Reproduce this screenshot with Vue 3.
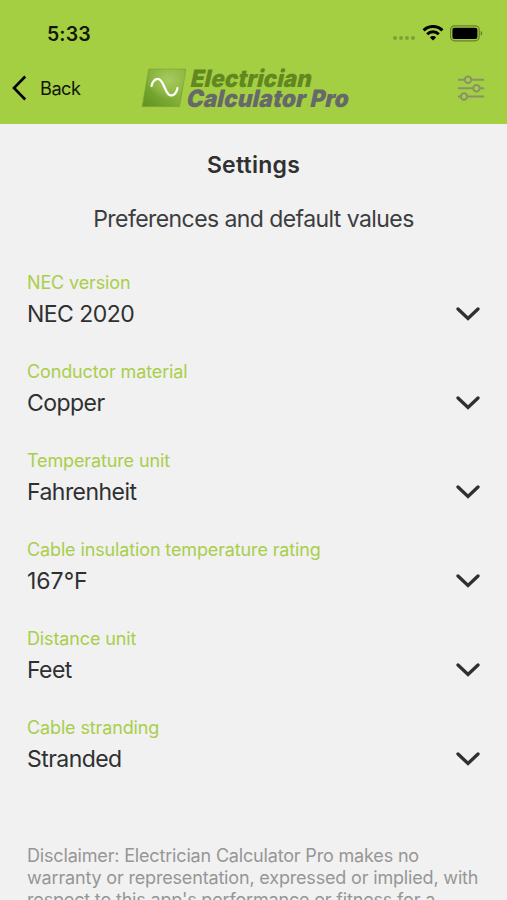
<template>
  <div class="screen">
    <header class="header">
      <div class="status-bar">
        <span class="time">5:33</span>
        <div class="status-icons">
          <svg class="signal" width="24" height="6" viewBox="0 0 24 6">
            <circle v-for="n in 4" :key="n" :cx="n * 6 - 3" cy="3" r="2" />
          </svg>
          <svg class="wifi" width="22" height="16" viewBox="0 0 22 16">
            <path d="M1.6 5.4a13.2 13.2 0 0 1 18.8 0" />
            <path d="M5.2 9.2a8.2 8.2 0 0 1 11.6 0" />
            <path class="wifi-dot" d="M11 15.4 7.9 12.4a4.4 4.4 0 0 1 6.2 0z" />
          </svg>
          <svg class="battery" width="33" height="17" viewBox="0 0 33 17">
            <rect class="battery-case" x="0.6" y="0.8" width="28.6" height="15" rx="4" />
            <rect x="2.4" y="2.7" width="25" height="11.2" rx="2" />
            <path class="battery-tip" d="M30.7 5.8c2 .9 2 4.1 0 5z" />
          </svg>
        </div>
      </div>

      <nav class="nav-bar">
        <button class="back">
          <svg width="16" height="26" viewBox="0 0 16 26">
            <path d="M13.2 1.5 2 13l11.2 11.5" />
          </svg>
          <span>Back</span>
        </button>
        <svg class="logo" width="210" height="44" viewBox="0 0 210 44">
          <defs>
            <linearGradient id="badge" x1="0" y1="1" x2="1" y2="0">
              <stop offset="0" stop-color="#5f921c" />
              <stop offset="0.5" stop-color="#83b13a" />
              <stop offset="1" stop-color="#8bb83e" />
            </linearGradient>
            <radialGradient id="glow" cx="0.6" cy="0.3" r="0.5">
              <stop offset="0" stop-color="#b6d26b" stop-opacity="0.75" />
              <stop offset="1" stop-color="#b6d26b" stop-opacity="0" />
            </radialGradient>
          </defs>
          <path class="badge" d="M7.8 3.2H44.8L38.5 40.6H1.2z" fill="url(#badge)" />
          <path d="M7.8 3.2H44.8L38.5 40.6H1.2z" fill="url(#glow)" />
          <path class="wave" d="M10.5 20C12.5 12 18.5 10.500 21.700 17.5L25.500 25.5C29 32.5 35 29.5 36.500 22" />
          <text class="logo-top" transform="translate(48.5 21.3) skewX(-12)" textLength="121" lengthAdjust="spacingAndGlyphs">Electrician</text>
          <text class="logo-bottom" transform="translate(44.5 41) skewX(-12)" textLength="162" lengthAdjust="spacingAndGlyphs">Calculator Pro</text>
        </svg>
        <svg class="sliders" width="26" height="26" viewBox="0 0 26 26">
          <path d="M0 4.8h6.8M13.2 4.8H26M0 13.2h15.3M21.7 13.2H26M0 21.5h2.8M9.2 21.5H26" />
          <circle cx="10" cy="4.8" r="3.2" />
          <circle cx="18.5" cy="13.2" r="3.2" />
          <circle cx="6" cy="21.5" r="3.2" />
        </svg>
      </nav>
    </header>

    <main class="content">
      <h1>Settings</h1>
      <p class="subtitle">Preferences and default values</p>

      <div class="settings">
        <div v-for="item in settings" :key="item.label" class="setting">
          <span class="label">{{ item.label }}</span>
          <div class="value">
            <span :class="{ degrees: item.degrees }">{{ item.value }}</span>
            <svg width="24" height="14" viewBox="0 0 24 14">
              <path d="M2 2 12 11.5 22 2" />
            </svg>
          </div>
        </div>
      </div>

      <p class="disclaimer">
        Disclaimer: Electrician Calculator Pro makes no<br />
        warranty or representation, expressed or implied, with<br />
        respect to this app's performance or fitness for a
      </p>
    </main>
  </div>
</template>

<script setup>
import { ref } from 'vue'

const settings = ref([
  { label: 'NEC version', value: 'NEC 2020' },
  { label: 'Conductor material', value: 'Copper' },
  { label: 'Temperature unit', value: 'Fahrenheit' },
  { label: 'Cable insulation temperature rating', value: '167°F', degrees: true },
  { label: 'Distance unit', value: 'Feet' },
  { label: 'Cable stranding', value: 'Stranded' },
])
</script>

<style>
body {
  margin: 0;
  background: #f1f1f1;
}
</style>

<style scoped>
.screen {
  height: 900px;
  overflow: hidden;
  background: #f1f1f1;
  color: #2f3032;
  font-family: Inter, "Liberation Sans", sans-serif;
}

.header {
  box-sizing: border-box;
  height: 124px;
  background: #a5cf42;
}

.status-bar {
  display: flex;
  align-items: center;
  justify-content: space-between;
  height: 66px;
  padding: 0 23px 0 47px;
}

.time {
  padding-top: 1px;
  color: #111a05;
  font-size: 19.5px;
  font-weight: 600;
  letter-spacing: 0.1px;
}

.status-icons {
  display: flex;
  align-items: center;
}

.signal {
  margin: 10px 6px 0 0;
  fill: #7f9f35;
}

.wifi {
  margin-right: 6px;
  fill: none;
  stroke: #000;
  stroke-width: 3;
}

.wifi-dot {
  fill: #000;
  stroke: none;
}

.battery {
  margin-right: 1px;
}

.battery-case {
  fill: none;
  stroke: #66802b;
  stroke-width: 1.2;
}

.battery-tip {
  fill: #66802b;
}

.nav-bar {
  display: flex;
  align-items: center;
  height: 44px;
  padding: 0 23px 0 12px;
}

.back {
  display: flex;
  align-items: center;
  gap: 12px;
  width: 128px;
  padding: 0;
  border: none;
  background: none;
  color: #10150a;
  font-family: inherit;
  font-size: 18.2px;
  letter-spacing: -0.5px;
}

.back path {
  fill: none;
  stroke: #000;
  stroke-width: 2.6;
}

.logo {
  margin-left: 1px;
  overflow: visible;
}

.logo text {
  font-weight: 900;
  font-size: 24px;
}

.badge {
  stroke: #7b9f3c;
  stroke-width: 0.8;
}

.wave {
  fill: none;
  stroke: #fff;
  stroke-width: 2.2;
  stroke-linecap: round;
}

.logo .logo-top {
  fill: #618820;
}

.logo .logo-bottom {
  fill: #66696a;
}

.sliders {
  margin-left: auto;
  fill: none;
  stroke: #88926a;
  stroke-width: 2;
}

.content {
  padding: 0 27px;
}

h1 {
  margin: 0;
  padding-top: 26px;
  font-size: 23px;
  font-weight: 600;
  letter-spacing: 0.25px;
  line-height: 30px;
  text-align: center;
}

.subtitle {
  margin: 24px 0 0;
  color: #3c3d3f;
  font-size: 23px;
  letter-spacing: -0.57px;
  line-height: 30px;
  text-align: center;
}

.settings {
  padding-top: 37px;
}

.setting {
  height: 89px;
}

.label {
  display: block;
  color: #a9ce4b;
  font-size: 18px;
  letter-spacing: -0.13px;
  line-height: 24px;
}

.value {
  display: flex;
  align-items: center;
  justify-content: space-between;
  padding-top: 4px;
  font-size: 23px;
  letter-spacing: -0.55px;
  line-height: 30px;
}

.value .degrees {
  letter-spacing: 0;
}

.value path {
  fill: none;
  stroke: #2f3032;
  stroke-width: 3.3;
  stroke-linecap: round;
}

.disclaimer {
  margin: 40px 0 0;
  color: #969696;
  font-size: 18px;
  letter-spacing: -0.17px;
  line-height: 22px;
  white-space: nowrap;
}
</style>
